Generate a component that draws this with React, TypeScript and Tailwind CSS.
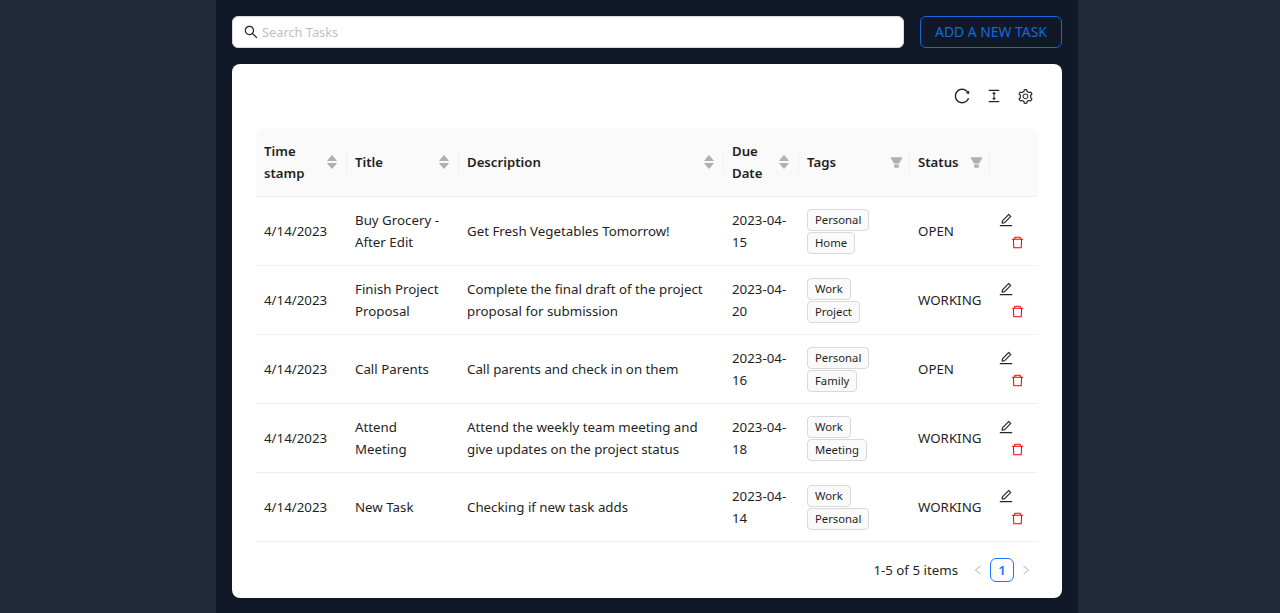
import {
  AiFillCaretDown,
  AiFillCaretUp,
  AiFillFilter,
  AiOutlineColumnHeight,
  AiOutlineDelete,
  AiOutlineEdit,
  AiOutlineLeft,
  AiOutlineReload,
  AiOutlineRight,
  AiOutlineSearch,
  AiOutlineSetting,
} from "react-icons/ai";

const tasks = [
  {
    title: "Buy Grocery - After Edit",
    description: "Get Fresh Vegetables Tomorrow!",
    due: "2023-04-15",
    tags: ["Personal", "Home"],
    status: "OPEN",
  },
  {
    title: "Finish Project Proposal",
    description: "Complete the final draft of the project proposal for submission",
    due: "2023-04-20",
    tags: ["Work", "Project"],
    status: "WORKING",
  },
  {
    title: "Call Parents",
    description: "Call parents and check in on them",
    due: "2023-04-16",
    tags: ["Personal", "Family"],
    status: "OPEN",
  },
  {
    title: "Attend Meeting",
    description: "Attend the weekly team meeting and give updates on the project status",
    due: "2023-04-18",
    tags: ["Work", "Meeting"],
    status: "WORKING",
  },
  {
    title: "New Task",
    description: "Checking if new task adds",
    due: "2023-04-14",
    tags: ["Work", "Personal"],
    status: "WORKING",
  },
];

function SortIcon() {
  return (
    <span className="flex flex-col text-[14px] leading-none text-[#b0b0b0]">
      <AiFillCaretUp className="-mb-[6px]" />
      <AiFillCaretDown />
    </span>
  );
}

function HeaderCell({
  children,
  width,
  filter,
  sort,
  last,
}: {
  children?: React.ReactNode;
  width: string;
  filter?: boolean;
  sort?: boolean;
  last?: boolean;
}) {
  return (
    <th className={`${width} p-0 text-left text-[13.2px] font-semibold`}>
      <div className="relative flex items-center justify-between px-2 py-3">
        <span>{children}</span>
        {sort && <SortIcon />}
        {filter && <AiFillFilter className="-mr-[2px] text-[15px] text-[#b0b0b0]" />}
        {!last && <span className="absolute right-0 top-1/2 h-[22px] w-px -translate-y-1/2 bg-[#f0f0f0]" />}
      </div>
    </th>
  );
}

export default function App() {
  return (
    <div className="flex h-screen overflow-hidden bg-[#1f2937] font-['Noto_Sans',sans-serif] text-[13.3px] leading-[22px] text-[#1f1f1f]">
      <div className="w-[216px] shrink-0" />
      <div className="flex w-[862px] flex-col gap-4 bg-[#111827] p-4">
        <div className="flex gap-4">
          <div className="flex h-8 flex-1 items-center gap-[3px] rounded-md border border-[#d9d9d9] bg-white px-[10px]">
            <AiOutlineSearch className="text-[16px] text-[#262626]" />
            <span className="text-[12.8px] text-[#bfbfbf]">Search Tasks</span>
          </div>
          <button className="h-8 w-[142px] rounded-md border border-[#1668dc] text-[13.9px] text-[#1668dc]">
            ADD A NEW TASK
          </button>
        </div>

        <div className="rounded-lg bg-white px-6 pb-4">
          <div className="flex h-16 items-center justify-end gap-[15px] pr-[4px] text-[16px] text-[#262626]">
            <AiOutlineReload className="text-[18px]" />
            <AiOutlineColumnHeight />
            <AiOutlineSetting className="text-[17px]" />
          </div>

          <table className="w-full table-fixed border-separate border-spacing-0">
            <thead>
              <tr className="h-[69px] bg-[#fafafa] [&>th]:border-b [&>th]:border-[#f0f0f0] [&>th:first-child]:rounded-tl-lg [&>th:last-child]:rounded-tr-lg">
                <HeaderCell width="w-[91px]" sort>
                  Time stamp
                </HeaderCell>
                <HeaderCell width="w-[112px]" sort>
                  Title
                </HeaderCell>
                <HeaderCell width="w-[265px]" sort>
                  Description
                </HeaderCell>
                <HeaderCell width="w-[75px]" sort>
                  Due Date
                </HeaderCell>
                <HeaderCell width="w-[111px]" filter>
                  Tags
                </HeaderCell>
                <HeaderCell width="w-[80px]" filter>
                  Status
                </HeaderCell>
                <HeaderCell width="w-[48px]" last />
              </tr>
            </thead>
            <tbody>
              {tasks.map((task) => (
                <tr key={task.title} className="h-[69px] [&>td]:border-b [&>td]:border-[#f0f0f0] [&>td]:px-2">
                  <td>4/14/2023</td>
                  <td>{task.title}</td>
                  <td>{task.description}</td>
                  <td>{task.due}</td>
                  <td>
                    {task.tags.map((tag) => (
                      <div key={tag}>
                        <span className="inline-block h-[22px] rounded border border-[#d9d9d9] bg-[#fafafa] px-[7px] text-[11.3px] leading-5">
                          {tag}
                        </span>
                      </div>
                    ))}
                  </td>
                  <td className="whitespace-nowrap">{task.status}</td>
                  <td>
                    <div className="flex flex-col">
                      <span className="flex h-[22px] items-center text-[16px] text-[#262626]">
                        <AiOutlineEdit />
                      </span>
                      <span className="ml-[12px] flex h-[22px] items-center text-[15px] text-[#ff0000]">
                        <AiOutlineDelete />
                      </span>
                    </div>
                  </td>
                </tr>
              ))}
            </tbody>
          </table>

          <div className="mt-4 flex h-6 items-center justify-end">
            <span className="mr-2">1-5 of 5 items</span>
            <AiOutlineLeft className="mx-[6px] text-[12px] text-[#bfbfbf]" />
            <span className="flex h-6 w-6 items-center justify-center rounded-md border border-[#1677ff] font-semibold text-[#1677ff]">
              1
            </span>
            <AiOutlineRight className="mx-[6px] text-[12px] text-[#bfbfbf]" />
          </div>
        </div>
      </div>
    </div>
  );
}
